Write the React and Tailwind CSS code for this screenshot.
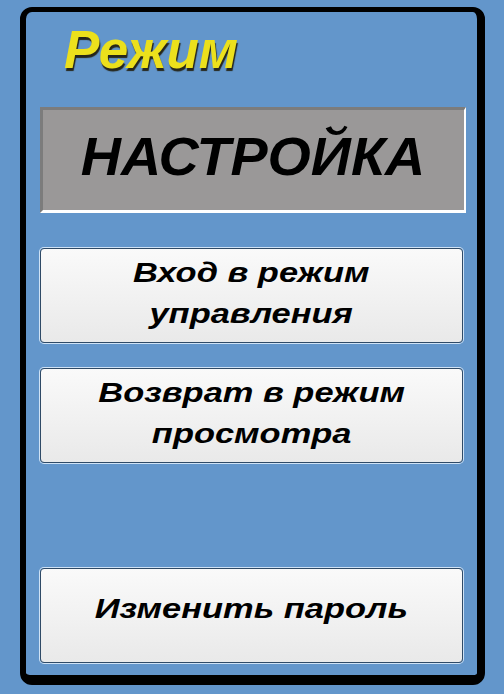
export default function App() {
  return (
    <div
      className="w-[504px] h-[694px] bg-[#6396cb] pt-[7px] pb-[9px] pl-[20px] pr-[19px]"
      style={{ fontFamily: '"Liberation Sans", Arial, sans-serif' }}
    >
      <div className="h-full rounded-[12px] border-[6px] border-t-[5px] border-r-[8px] border-b-[10px] border-black flex flex-col pl-[14px] pr-[11px] pb-[12px]">
        <div className="h-[95px] pl-[24px] pt-[8px]">
          <span className="inline-block text-[53px] leading-[60px] font-bold italic text-[#ece01c] [text-shadow:1px_3px_1px_#26261a]">
            Режим
          </span>
        </div>
        <div className="h-[106px] pb-[6px] bg-[#9a9898] border-t-[3px] border-l-[3px] border-[#7c7c7c] border-b-[3px] border-b-white border-r-[2px] border-r-white flex items-center justify-center">
          <span className="inline-block scale-x-[1.05] text-[53px] leading-[60px] font-bold italic text-black">НАСТРОЙКА</span>
        </div>
        <div className="mt-[35px] pr-[3px] flex flex-col gap-[25px]">
          <Button>
            Вход в режим
            <br />
            управления
          </Button>
          <Button>
            Возврат в режим
            <br />
            просмотра
          </Button>
        </div>
        <div className="mt-auto pr-[3px]">
          <Button pad="pb-[14px]">Изменить пароль</Button>
        </div>
      </div>
    </div>
  );
}

function Button({ children, pad = "pb-[6px]" }) {
  return (
    <div
      className={`h-[95px] ${pad} rounded-[4px] border border-[#2f4a66] shadow-[0_0_0_1px_#cfe2f5] bg-gradient-to-b from-[#fafafa] to-[#e9e9e9] flex items-center justify-center text-center`}
    >
      <span className="inline-block scale-x-[1.23] text-[28px] leading-[41px] font-bold italic text-black">{children}</span>
    </div>
  );
}
